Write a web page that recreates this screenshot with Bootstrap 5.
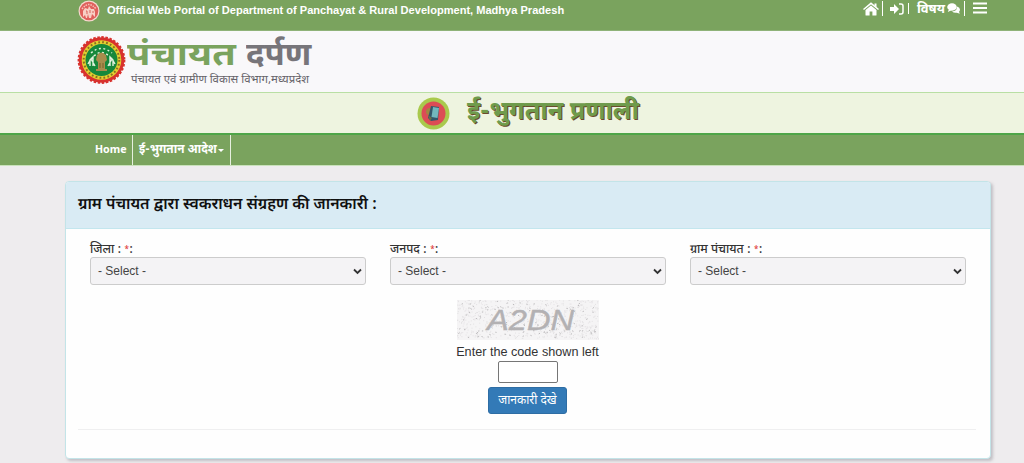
<!DOCTYPE html>
<html lang="hi">
<head>
<meta charset="utf-8">
<meta name="viewport" content="width=device-width, initial-scale=1">
<title>Panchayat Darpan</title>
<link href="https://cdn.jsdelivr.net/npm/bootstrap@5.3.0/dist/css/bootstrap.min.css" rel="stylesheet">
<style>
body{background:#eeecee;font-family:"Liberation Sans","Noto Sans Devanagari","Noto Sans",sans-serif;font-size:13px;color:#333;height:463px;overflow:hidden}
.deva{font-family:"Noto Sans Devanagari","Noto Sans",sans-serif;white-space:nowrap}
.topbar{height:31px;background:#7aa35e;color:#fff;padding:0 36px 8px 78px;border-bottom:1px solid #8fb278}
.portal-title{font-size:11.07px;font-weight:700;margin-left:7px;line-height:22px;margin-top:-2px;white-space:nowrap}
.tools{height:18px;margin-top:-5px}
.tools .sep{width:1px;height:15px;background:#fff}
.tools .deva{font-size:13px;font-weight:700;line-height:16px;padding-top:2px}
.brandrow{height:61px;background:#f9f8fa;padding-left:77px}
.brand-name{font-size:32px;line-height:34px;font-weight:700;color:#7aa35e;height:38px;padding-top:5px;margin-left:1px}
.brand-name span{display:inline-block;transform-origin:0 0}
.brand-name .w1{transform:scaleX(1.19);width:119px}
.brand-name .w2{transform:scaleX(1.03);color:#77757a}
.brand-sub{font-size:11.4px;line-height:16px;color:#66646a;margin:0 0 0 5px}
.titleband{height:41px;background:#eef4e0;border-top:1px solid #b9dfa4;padding-left:417px}
.page-title{font-size:25.2px;line-height:38px;font-weight:700;color:#6f9b4c;text-shadow:1px 1px 0 #6b4a2c;margin-left:17px}
.mainnav{height:33px;background:#7aa35e;border-top:2px solid #4ea548;border-bottom:1px solid #c9e2bb;padding-left:89px}
.mainnav a{color:#fff;font-weight:700;font-size:11.9px;text-decoration:none;border-right:1px solid #e6f0df;height:100%;padding:1px 6px 0}
.mainnav a.home{font-size:10.7px;padding:0 5.5px 0 6px}
.caret{border:3px solid transparent;border-top-color:#fff;border-bottom:0;margin-left:1px}
.panel{width:926px;height:278px;margin:15px 0 0 65px;background:#fefefe;border:1px solid #c3e4e8;border-radius:4px;box-shadow:2px 2px 3px rgba(110,110,120,.35)}
.panel-head{height:47px;background:#d9ebf4;border-bottom:1px solid #c3e6ee;border-radius:3px 3px 0 0;padding:2px 0 0 12px;color:#111;font-size:15.8px;font-weight:600}
.fields{padding:11px 24px 0 24px;gap:24px}
.fields>div{flex:1 1 0}
.field-label{font-size:12.2px;font-weight:500;line-height:20px;height:16px;margin-bottom:1px}
.star{color:#e04040;font-size:8px;vertical-align:1px}
.pick{height:28px;width:100%;background:#f4f3f5;border:1px solid #ccc;border-radius:3px;padding:0 3px 0 7px;font-size:12px;color:#444}
.captcha{width:142px;height:40px;margin-top:15px}
.middle{padding-right:1px}
.prompt-text{font-size:12.65px;line-height:17px;margin-top:4px;white-space:nowrap}
.code{width:60px;height:22px;border:1px solid #767676;border-radius:2px}
.go{background:#337ab7;border:1px solid #2e6da4;border-radius:3px;color:#fff;width:79px;height:27px;margin-top:4px;padding:1px 0 0;font-size:12px}
.rule{border-top:1px solid #efeff0;margin:15px 14px 0 12px}
</style>
</head>
<body>
<header>
<div class="topbar d-flex align-items-center justify-content-between">
  <div class="d-flex align-items-center">
    <svg width="22" height="22" viewBox="0 0 22 22"><circle cx="11" cy="11" r="10.5" fill="#f6d9d0"/><circle cx="11" cy="11" r="9.3" fill="#e0605c"/><path d="M4 9Q11 0 18 9" fill="none" stroke="#f6c5bc" stroke-width="1.5" stroke-dasharray="1.5 1"/><path d="M5 17V11l2-3 3 1 1-3 2 3 3 0 1 3v5l-3-3-1 4h-2l-1-4-1 4H8l-1-3z" fill="#f8cfc5"/><path d="M8 11h1v3M12 10v3M15 11v2" stroke="#d9635d" fill="none"/></svg>
    <span class="portal-title">Official Web Portal of Department of Panchayat &amp; Rural Development, Madhya Pradesh</span>
  </div>
  <div class="tools d-flex align-items-center">
    <svg width="16" height="14" viewBox="0 0 16 14" fill="#fff"><path d="M8 3.500 2.500 8v5q0 .6.6.6h3.500V9.500h2.800v4.100h3.500q.6 0 .6-.6V8z"/><path d="M.5 7.500 8 1.300l7.500 6.200" fill="none" stroke="#fff" stroke-width="1.500"/><path d="M11.500 1.500h2v4l-2-1.700z"/></svg>
    <i class="sep" style="margin:0 7px 0 3px"></i>
    <svg width="14" height="14" viewBox="0 0 14 14"><path d="M0 5h4V2l5 5-5 5V9H0z" fill="#fff"/><path d="M9 2h2q2 0 2 2v6q0 2-2 2H9" fill="none" stroke="#fff" stroke-width="1.500"/></svg>
    <i class="sep" style="margin:0 8px 0 4px;height:11px"></i>
    <span class="deva">विषय</span>
    <svg width="13" height="13" viewBox="0 0 13 13" fill="#fff" style="margin-left:2px"><ellipse cx="5" cy="5" rx="4.800" ry="3.700"/><path d="M2 7 .8 10 5 8zM10 4.500Q13 5.400 13 7.700q0 1.200-1 2l.8 2-3-1q-3 .4-4.800-1.300Q10 9.400 10 4.500z"/></svg>
    <i class="sep" style="margin:0 8px 0 4px"></i>
    <svg width="15" height="14" viewBox="0 0 15 14"><path d="M0 1.500h14M0 6h14M0 10.500h14" stroke="#fff" stroke-width="2"/></svg>
  </div>
</div>
<div class="brandrow d-flex align-items-start">
  <svg width="49" height="50" viewBox="0 0 49 50" style="margin-top:4px"><circle cx="24.500" cy="25" r="22.800" fill="#d8322e" stroke="#d8322e" stroke-width="2.200" stroke-dasharray="2.500 1.600"/><circle cx="24.500" cy="25" r="19.800" fill="#e3cf2f"/><circle cx="24.500" cy="25" r="17.800" fill="none" stroke="#8b6f22" stroke-width="2" stroke-dasharray="1.800 2.200"/><circle cx="24.500" cy="25" r="16" fill="#16883b"/><g fill="none" stroke="#e3f2df" stroke-width="1.400"><path d="M13 31V25l3-3v9M36 31V25l-3-3v9M11 29l3-5 4 7M38 29l-3-5-4 7"/><path d="M14 18q10-9 21 0M17 21q7-7 15 0" stroke-dasharray="2 2.500"/></g><path d="M20 20q4.500-5 9 0l1 5-2 2v7h2v2H19v-2h2v-7l-2-2z" fill="#a98c4c"/><path d="M23 28v5M26 28v5" stroke="#77632b"/></svg>
  <div class="pt-1">
    <div class="brand-name deva"><span class="w1">पंचायत</span><span class="w2">दर्पण</span></div>
    <div class="brand-sub deva">पंचायत एवं ग्रामीण विकास विभाग,मध्यप्रदेश</div>
  </div>
</div>
<div class="titleband d-flex align-items-center">
  <svg width="33" height="33" viewBox="0 0 33 33"><circle cx="16.500" cy="16.500" r="16" fill="#a9c94c"/><circle cx="16.500" cy="16.500" r="12" fill="#dc4c55"/><circle cx="12.500" cy="14.500" r="3.500" fill="#a18540"/><path d="m14 9 8 1-1 13-7 1-3-3z" fill="#32576a"/><path d="m16 10 6 1-1.500 10-6-1z" fill="#72b8bd"/><path d="m11 18 4 3-2 3" fill="#6b7044"/></svg>
  <div class="page-title deva">ई-भुगतान प्रणाली</div>
</div>
<nav class="mainnav d-flex">
  <a href="#" class="home d-flex align-items-center deva">Home</a>
  <a href="#" class="d-flex align-items-center deva">ई-भुगतान आदेश<i class="caret"></i></a>
</nav>
</header>
<main class="panel">
  <div class="panel-head deva d-flex align-items-center">ग्राम पंचायत द्वारा स्वकराधन संग्रहण की जानकारी :</div>
  <div class="fields d-flex">
    <div><div class="field-label deva">जिला : <span class="star">*</span>:</div><div class="pick d-flex align-items-center justify-content-between">- Select -<svg width="9" height="7" viewBox="0 0 9 7"><path d="m1 1.500 3.500 3.500L8 1.500" fill="none" stroke="#333" stroke-width="1.800"/></svg></div></div>
    <div><div class="field-label deva">जनपद : <span class="star">*</span>:</div><div class="pick d-flex align-items-center justify-content-between">- Select -<svg width="9" height="7" viewBox="0 0 9 7"><path d="m1 1.500 3.500 3.500L8 1.500" fill="none" stroke="#333" stroke-width="1.800"/></svg></div></div>
    <div><div class="field-label deva">ग्राम पंचायत : <span class="star">*</span>:</div><div class="pick d-flex align-items-center justify-content-between">- Select -<svg width="9" height="7" viewBox="0 0 9 7"><path d="m1 1.500 3.500 3.500L8 1.500" fill="none" stroke="#333" stroke-width="1.800"/></svg></div></div>
  </div>
  <div class="middle d-flex flex-column align-items-center">
    <svg class="captcha" viewBox="0 0 142 40"><rect width="142" height="40" fill="#f5f4f5"/><g id="specks"></g><text x="30" y="30" font-family="Liberation Sans" font-size="29" font-style="italic" fill="#b3b1b3" stroke="#b3b1b3" stroke-width=".4" textLength="87" lengthAdjust="spacingAndGlyphs">A2DN</text></svg>
    <div class="prompt-text">Enter the code shown left</div>
    <input class="code" aria-label="code">
    <button class="go deva">जानकारी देखे</button>
  </div>
  <div class="rule"></div>
</main>
<script>
// Deterministic captcha noise: a fine grain plus a few darker dots
let seed=7;const rnd=()=>(seed=(seed*16807)%2147483647)/2147483647;
let fine='',dark='';
for(let i=0;i<700;i++)fine+=`M${(rnd()*141).toFixed(1)} ${(rnd()*39).toFixed(1)}h1`;
for(let i=0;i<120;i++)dark+=`M${(rnd()*139).toFixed(1)} ${(rnd()*38).toFixed(1)}l1.300 ${(rnd()*2-1).toFixed(1)}`;
document.getElementById('specks').innerHTML=`<path d="${fine}" stroke="#e4e2e4"/><path d="${dark}" stroke="#bdbbbd"/>`;
</script>
<script src="https://cdn.jsdelivr.net/npm/bootstrap@5.3.0/dist/js/bootstrap.bundle.min.js"></script>
</body>
</html>
